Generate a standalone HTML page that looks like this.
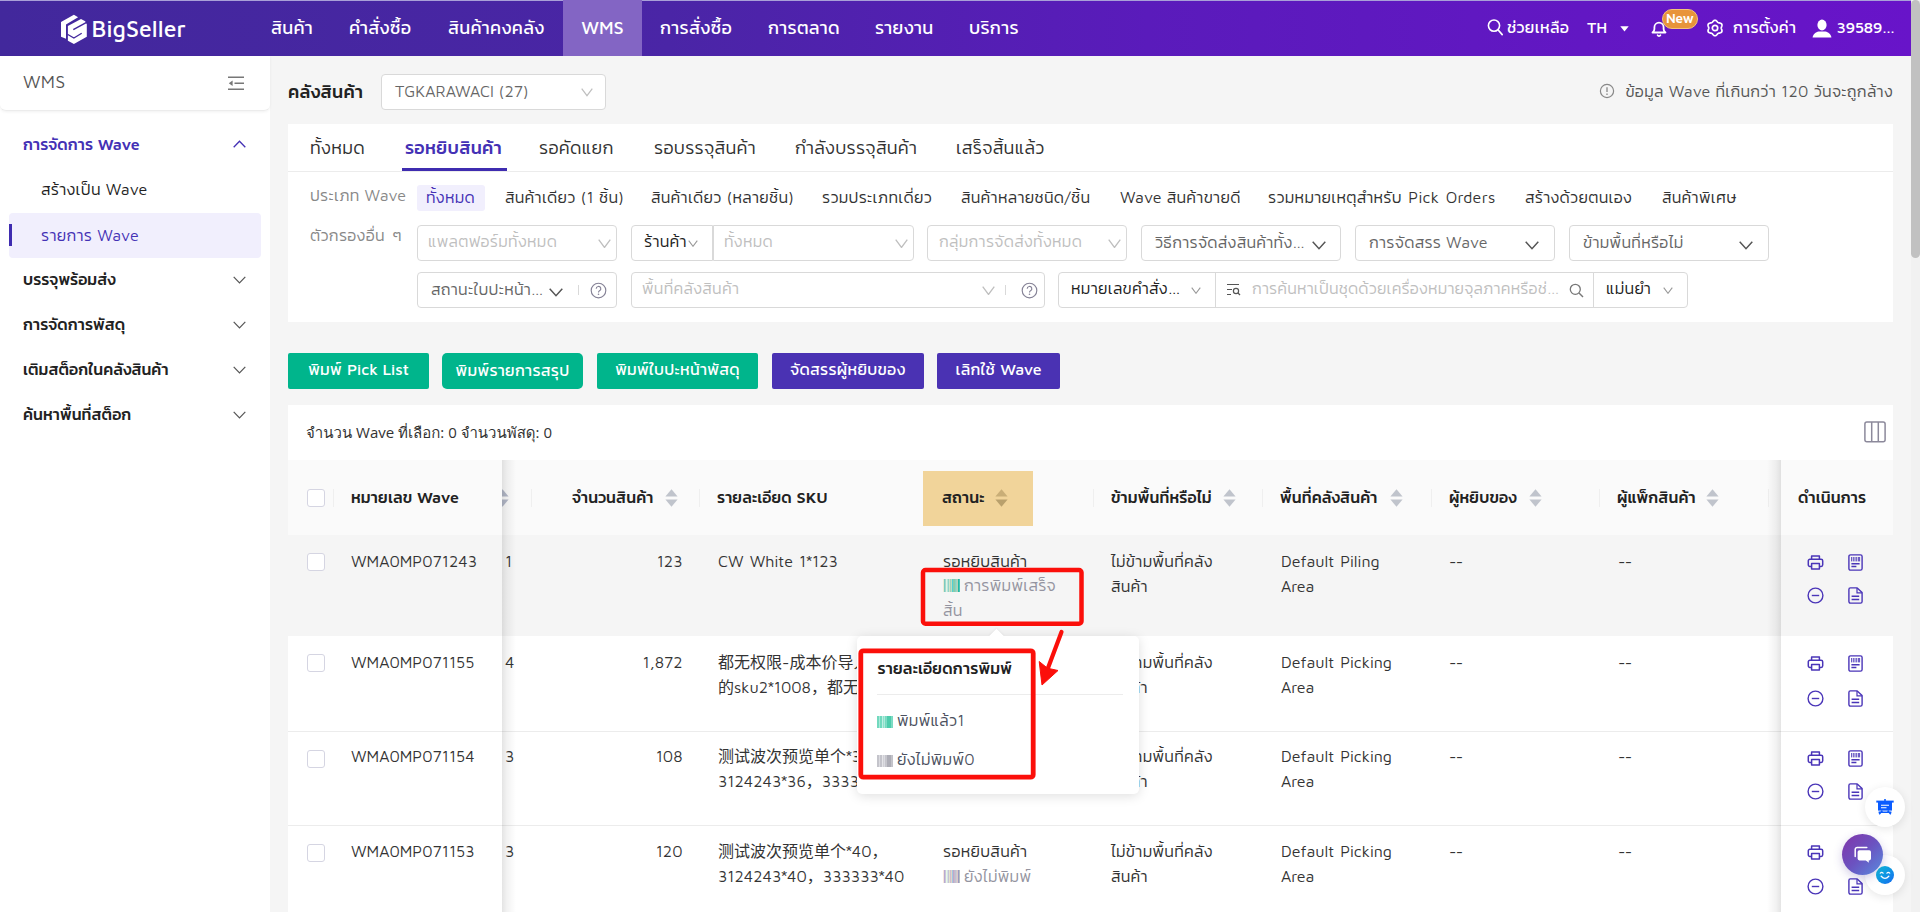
<!DOCTYPE html>
<html lang="th">
<head>
<meta charset="utf-8">
<title>BigSeller WMS - รายการ Wave</title>
<style>
*{box-sizing:border-box;margin:0;padding:0}
html,body{width:1920px;height:912px;overflow:hidden;background:#f5f5f5}
body{font-family:"Maven Pro","Kanit","Liberation Sans","Noto Sans CJK SC",sans-serif;font-weight:300;font-size:16px;color:#333;position:relative;letter-spacing:.3px}
b.m5{font-weight:500;letter-spacing:0}b.m6{font-weight:600;letter-spacing:0}
/* ---------- header ---------- */
#hdr{position:absolute;left:0;top:0;width:1911px;height:56px;background:linear-gradient(90deg,#42289c 0%,#4a25a6 35%,#5a1bbb 60%,#6814c9 100%);color:#fff}
#hdr .topline{position:absolute;left:0;top:0;width:100%;height:1px;background:#a9a0d8}
#logo{position:absolute;left:56px;top:10px}
#logotxt{position:absolute;left:91.500px;top:13px;font-size:23px;font-weight:500;letter-spacing:.1px;color:#fff;line-height:32px}
.nav{position:absolute;top:0;height:56px;line-height:55px;font-size:18px;font-weight:400;color:#fff;white-space:nowrap}
.nav.act{background:#8365c4;text-align:center}
.hr{position:absolute;top:0;height:56px;line-height:54px;font-size:16px;font-weight:400;color:#fff;white-space:nowrap}
/* ---------- scrollbar ---------- */
#sb{position:absolute;left:1911px;top:0;width:9px;height:912px;background:#f1f1f1}
#sb i{position:absolute;left:0;top:0;width:9px;height:258px;background:#c1c1c1;border-radius:5px}
/* ---------- sidebar ---------- */
#side{position:absolute;left:0;top:56px;width:270px;height:856px;background:#fff}
#side .ttl{position:absolute;left:0;top:0;width:270px;height:55px;border-bottom:1px solid #ececec;box-shadow:0 1px 3px rgba(0,0,0,.06);border-radius:0 0 6px 6px}
#side .ttl span{position:absolute;left:23px;top:15px;font-size:18px;font-weight:400;color:#555}
.mi{position:absolute;left:0;width:270px;height:45px;line-height:44px;font-size:16px;color:#222;font-weight:500;white-space:nowrap;letter-spacing:.05px}
.mi span{position:absolute;left:23px}
.mi.sub span{left:41px;font-weight:300}
.mi.sub{font-weight:300;letter-spacing:.3px}
.mi svg{position:absolute;left:233px;top:18.500px}
.mi.cur{left:9px;width:252px;background:#f1effd;border-radius:4px;color:#4431b5}
.mi.cur span{left:32px}
.mi.cur:before{content:"";position:absolute;left:0;top:11px;width:3px;height:22px;background:#3f2cb0}

/* ---------- main ---------- */
#main{position:absolute;left:270px;top:56px;width:1641px;height:856px}
.abs{position:absolute;white-space:nowrap}
.panel{position:absolute;background:#fff}
.wh-l{position:absolute;left:18px;top:22px;font-size:18px;font-weight:500;color:#222;line-height:28px}
.sel{position:absolute;height:36px;border:1px solid #d9d9d9;border-radius:4px;background:#fff;font-size:16px;line-height:33px;color:#bfbfbf;white-space:nowrap;overflow:hidden}
.sel .t{position:absolute;left:10px;top:-.8px}
.sel.dk{color:#666}.sel.dk .t{top:.200px}
.sel.bk{color:#222}
.sel svg{position:absolute}
.tab{position:absolute;top:0;height:47px;line-height:47px;font-size:18px;color:#333;white-space:nowrap}
.tab.on{color:#4431b5;font-weight:500}
.chip{position:absolute;top:61px;height:26px;line-height:25px;font-size:16px;color:#333;padding:0 9px;border-radius:3px;white-space:nowrap}
.chip.on{background:#f1effd;color:#4431b5;padding-right:10px}
.flab{position:absolute;left:22px;font-size:16px;color:#888;white-space:nowrap;line-height:24px}
.btn{position:absolute;top:297px;height:36px;line-height:32.500px;border-radius:2px;color:#fff;font-size:16px;font-weight:400;text-align:center;white-space:nowrap}
.btn.g{background:#00b58c}
.btn.p{background:#4a32b3}

/* ---------- table ---------- */
#tp .cnt{position:absolute;left:18px;top:16px;font-family:"Open Sans",Loma,"Noto Sans Thai","Liberation Sans",sans-serif;font-weight:400;font-size:15px;color:#333;line-height:22px;white-space:nowrap;letter-spacing:0}
.thead{position:absolute;left:0;top:55px;width:1605px;height:75px;background:#fafafa}
.th{position:absolute;top:0;height:75px;line-height:74px;font-size:16px;font-weight:500;color:#222;white-space:nowrap;letter-spacing:.1px}
.vsep{position:absolute;top:29px;width:1px;height:18px;background:#efefef}
.srt{position:absolute;top:29px;width:13px;height:18px}
.row{position:absolute;left:0;width:1605px;border-bottom:1px solid #ececec;background:#fff}
.row.r2 .td{line-height:25px}.row.r3 .td{top:12px}.row.r4 .td{top:12.500px;line-height:25px}.row.hv{background:#f5f5f5;border-bottom-color:#f5f5f5}
.td{position:absolute;top:14px;font-size:16px;line-height:24.600px;color:#333;font-weight:300;white-space:nowrap}
.td.l{font-weight:400;letter-spacing:0;word-spacing:1.500px}.as{font-family:Kanit,"Liberation Sans",sans-serif;font-weight:300;margin:0 -.6px}
.cb{position:absolute;left:19px;width:18px;height:18px;border:1px solid #d5d5e2;border-radius:3px;background:#fff}
.gry{color:#9494a0}
.bc{display:inline-block;width:17px;height:13px;vertical-align:-1.500px;margin-right:4px}
.fixl{position:absolute;left:214px;top:55px;width:14px;height:452px;background:linear-gradient(90deg,rgba(0,0,0,.105),rgba(0,0,0,.05) 35%,rgba(0,0,0,0));pointer-events:none}
.fixr{position:absolute;left:1479px;top:55px;width:14px;height:452px;background:linear-gradient(270deg,rgba(0,0,0,.105),rgba(0,0,0,.05) 35%,rgba(0,0,0,0));pointer-events:none}
.ic{position:absolute}

/* ---------- popover / annotations / floats ---------- */
#pop{position:absolute;left:857px;top:636px;width:282px;height:158px;background:#fff;border-radius:5px;box-shadow:0 2px 12px rgba(0,0,0,.13)}
#pop:before{content:"";position:absolute;left:134px;top:-5px;width:11px;height:11px;background:#fff;transform:rotate(45deg);box-shadow:-1px -1px 2px rgba(0,0,0,.04)}
#pop .pt{position:absolute;left:20.500px;top:19px;letter-spacing:.15px;font-size:16px;font-weight:500;color:#222;line-height:26px;white-space:nowrap}
#pop .pl{position:absolute;left:20px;top:58px;width:246px;height:1px;background:#ececec}
#pop .pi{position:absolute;left:20px;font-size:16px;color:#4c5160;line-height:24px;white-space:nowrap}
#anno{position:absolute;left:0;top:0;pointer-events:none}
.fl{position:absolute;border-radius:50%}
</style>
</head>
<body>
<!-- HEADER -->
<div id="hdr">
  <div class="topline"></div>
  <svg id="logo" width="40" height="38" viewBox="0 0 40 38"><path d="M5 12.1L17.900 4.800L22.100 7.300L10 14.400V28.750L5 26.700Z" fill="#fff"/><path d="M11.900 16L25 8.950L29.200 11.250L30.800 14.400V26.700L17.900 34L11.900 30.800Z" fill="#fff"/><path d="M31.500 11.900L17.300 19.600" stroke="#43289d" stroke-width="1.500" fill="none"/><path d="M11.400 24.300L17.900 28.100L25.700 23.200" stroke="#43289d" stroke-width="1.300" fill="none"/></svg>
  <div id="logotxt">BigSeller</div>
  <div class="nav" style="left:271px">สินค้า</div>
  <div class="nav" style="left:349px">คำสั่งซื้อ</div>
  <div class="nav" style="left:448px">สินค้าคงคลัง</div>
  <div class="nav act" style="left:563px;width:79px;font-weight:500;letter-spacing:0">WMS</div>
  <div class="nav" style="left:660px">การสั่งซื้อ</div>
  <div class="nav" style="left:768px">การตลาด</div>
  <div class="nav" style="left:875px">รายงาน</div>
  <div class="nav" style="left:969px">บริการ</div>
  <svg class="abs" style="left:1487px;top:18px" width="17" height="18" viewBox="0 0 17 18"><circle cx="7" cy="7.6" r="5.6" fill="none" stroke="#fff" stroke-width="1.6"/><path d="M11.2 12l4 4.6" stroke="#fff" stroke-width="1.7" stroke-linecap="round"/></svg>
  <svg class="abs" style="left:1620px;top:26px" width="9" height="6" viewBox="0 0 9 6"><path d="M0.3 0.3h8.4L4.5 5.6z" fill="#fff"/></svg>
  <svg class="abs" style="left:1650px;top:19px" width="18" height="19" viewBox="0 0 18 19"><path d="M2.500 13.500c1.300-.900 1.900-2 1.900-3.600V8.300a4.600 4.600 0 0 1 9.200 0v1.600c0 1.600.600 2.700 1.900 3.600z" fill="none" stroke="#fff" stroke-width="1.800" stroke-linejoin="round"/><path d="M7.500 16.200a1.700 1.700 0 0 0 3 0" fill="none" stroke="#fff" stroke-width="1.600" stroke-linecap="round"/></svg>
  <div class="abs" style="left:1661.500px;top:9px;width:36.500px;height:20px;border-radius:10px;background:#e8943a;border:1px solid #f4c27a;color:#fff;font-size:13.500px;font-weight:600;line-height:17px;text-align:center;letter-spacing:-.2px">New</div>
  <svg class="abs" style="left:1706px;top:19px" width="18" height="18" viewBox="0 0 18 18"><path d="M15.71 12.88 L15.40 13.27 L14.97 13.58 L14.48 13.80 L13.95 13.95 L13.43 14.05 L12.94 14.13 L12.50 14.24 L12.12 14.41 L11.79 14.66 L11.48 14.98 L11.16 15.36 L10.81 15.76 L10.42 16.15 L9.98 16.47 L9.50 16.68 L9.00 16.75 L8.50 16.68 L8.02 16.47 L7.58 16.15 L7.19 15.76 L6.84 15.36 L6.52 14.98 L6.21 14.66 L5.88 14.41 L5.50 14.24 L5.06 14.13 L4.57 14.05 L4.05 13.95 L3.52 13.80 L3.03 13.58 L2.60 13.27 L2.29 12.88 L2.10 12.40 L2.04 11.88 L2.10 11.34 L2.24 10.81 L2.42 10.31 L2.59 9.84 L2.71 9.41 L2.75 9.00 L2.71 8.59 L2.59 8.16 L2.42 7.69 L2.24 7.19 L2.10 6.66 L2.04 6.12 L2.10 5.60 L2.29 5.13 L2.60 4.73 L3.03 4.42 L3.52 4.20 L4.05 4.05 L4.57 3.95 L5.06 3.87 L5.50 3.76 L5.87 3.59 L6.21 3.34 L6.52 3.02 L6.84 2.64 L7.19 2.24 L7.58 1.85 L8.02 1.53 L8.50 1.32 L9.00 1.25 L9.50 1.32 L9.98 1.53 L10.42 1.85 L10.81 2.24 L11.16 2.64 L11.48 3.02 L11.79 3.34 L12.12 3.59 L12.50 3.76 L12.94 3.87 L13.43 3.95 L13.95 4.05 L14.48 4.20 L14.97 4.42 L15.40 4.73 L15.71 5.13 L15.90 5.60 L15.96 6.12 L15.90 6.66 L15.76 7.19 L15.58 7.69 L15.41 8.16 L15.29 8.59 L15.25 9.00 L15.29 9.41 L15.41 9.84 L15.58 10.31 L15.76 10.81 L15.90 11.34 L15.96 11.88 L15.90 12.40Z" fill="none" stroke="#fff" stroke-width="1.700" stroke-linejoin="round"/><circle cx="9" cy="9" r="2.700" fill="none" stroke="#fff" stroke-width="1.700"/></svg>
  <svg class="abs" style="left:1812px;top:19px" width="20" height="19" viewBox="0 0 20 19"><ellipse cx="10" cy="6" rx="4.600" ry="5.400" fill="#fff"/><path d="M0.600 18.600c.400-3.600 3.200-5.400 6-6h6.800c2.800.600 5.600 2.400 6 6z" fill="#fff"/></svg>
  <div class="hr" style="left:1507px">ช่วยเหลือ</div>
  <div class="hr" style="left:1587px;letter-spacing:0;font-weight:500">TH</div>
  <div class="hr" style="left:1733px">การตั้งค่า</div>
  <div class="hr" style="left:1836.500px;letter-spacing:-.45px;font-weight:500">39589…</div>
</div>
<div id="sb"><i></i></div>

<!-- SIDEBAR -->
<div id="side">
  <div class="ttl"><span>WMS</span><svg style="position:absolute;left:228.400px;top:20.300px" width="16" height="14.500" viewBox="0 0 16 14"><path d="M0 1h16M6.500 7h9.500M0 13h16" stroke="#777" stroke-width="1.300"/><path d="M4.600 4.200L0.800 7l3.800 2.800z" fill="#777"/></svg></div>
  <div class="mi" style="top:66px;color:#4431b5;font-weight:500"><span>การจัดการ <b class="m6">Wave</b></span><svg style="top:17.500px" width="13" height="8" viewBox="0 0 13 8"><path d="M0.7 7.2L6.5 1.2L12.3 7.2" fill="none" stroke="#4431b5" stroke-width="1.3"/></svg></div>
  <div class="mi sub" style="top:111px"><span>สร้างเป็น Wave</span></div>
  <div class="mi sub cur" style="top:157px"><span>รายการ Wave</span></div>
  <div class="mi" style="top:201px"><span>บรรจุพร้อมส่ง</span><svg width="13" height="8" viewBox="0 0 13 8"><path d="M0.7 0.800L6.5 6.800L12.3 0.800" fill="none" stroke="#555" stroke-width="1.2"/></svg></div>
  <div class="mi" style="top:246px"><span>การจัดการพัสดุ</span><svg width="13" height="8" viewBox="0 0 13 8"><path d="M0.7 0.800L6.5 6.800L12.3 0.800" fill="none" stroke="#555" stroke-width="1.2"/></svg></div>
  <div class="mi" style="top:291px"><span>เติมสต็อกในคลังสินค้า</span><svg width="13" height="8" viewBox="0 0 13 8"><path d="M0.7 0.800L6.5 6.800L12.3 0.800" fill="none" stroke="#555" stroke-width="1.2"/></svg></div>
  <div class="mi" style="top:336px"><span>ค้นหาพื้นที่สต็อก</span><svg width="13" height="8" viewBox="0 0 13 8"><path d="M0.7 0.800L6.5 6.800L12.3 0.800" fill="none" stroke="#555" stroke-width="1.2"/></svg></div>
</div>

<!-- MAIN -->
<div id="main">
  <!-- warehouse bar -->
  <div class="wh-l">คลังสินค้า</div>
  <div class="sel dk" style="left:111px;top:18px;width:225px"><span class="t" style="left:13px;letter-spacing:.1px">TGKARAWACI (27)</span><svg style="left:199px;top:13px" width="12" height="8.6" viewBox="0 0 12 8.6"><path d="M0.7 0.7 L6.0 7.7 L11.3 0.7" fill="none" stroke="#bfbfbf" stroke-width="1.2"/></svg></div>
  <svg class="abs" style="left:1329px;top:27px" width="16" height="16" viewBox="0 0 16 16"><circle cx="8" cy="8" r="6.6" fill="none" stroke="#888" stroke-width="1.2"/><path d="M8 4.3v4.6M8 10.6v1.3" stroke="#888" stroke-width="1.3"/></svg>
  <div class="abs" style="right:18px;top:22px;font-size:16px;color:#555;line-height:26px">ข้อมูล Wave ที่เกินกว่า 120 วันจะถูกล้าง</div>

  <!-- filter panel -->
  <div class="panel" style="left:18px;top:68px;width:1605px;height:198px">
    <div style="position:absolute;left:0;top:47px;width:100%;height:1px;background:#ececec"></div>
    <div class="tab" style="left:22px">ทั้งหมด</div>
    <div class="tab on" style="left:117px">รอหยิบสินค้า</div>
    <div style="position:absolute;left:114px;top:44px;width:105px;height:3px;background:#3f2cb0"></div>
    <div class="tab" style="left:251px">รอคัดแยก</div>
    <div class="tab" style="left:366px">รอบรรจุสินค้า</div>
    <div class="tab" style="left:507px">กำลังบรรจุสินค้า</div>
    <div class="tab" style="left:668px">เสร็จสิ้นแล้ว</div>

    <div class="flab" style="top:59px">ประเภท Wave</div>
    <div class="chip on" style="left:129px">ทั้งหมด</div>
    <div class="chip" style="left:208px">สินค้าเดียว (1 ชิ้น)</div>
    <div class="chip" style="left:354px">สินค้าเดียว (หลายชิ้น)</div>
    <div class="chip" style="left:525px">รวมประเภทเดี่ยว</div>
    <div class="chip" style="left:664px">สินค้าหลายชนิด/ชิ้น</div>
    <div class="chip" style="left:823px">Wave สินค้าขายดี</div>
    <div class="chip" style="left:971px;word-spacing:1.500px">รวมหมายเหตุสำหรับ Pick Orders</div>
    <div class="chip" style="left:1228px">สร้างด้วยตนเอง</div>
    <div class="chip" style="left:1365px">สินค้าพิเศษ</div>

    <div class="flab" style="top:99px;word-spacing:2.500px">ตัวกรองอื่น ๆ</div>
    <!-- row 2 -->
    <div class="sel" style="left:129px;top:101px;width:200px"><span class="t">แพลตฟอร์มทั้งหมด</span><svg style="left:180px;top:13px" width="13" height="9.4" viewBox="0 0 13 9.4"><path d="M0.7 0.7 L6.5 8.5 L12.3 0.7" fill="none" stroke="#bfbfbf" stroke-width="1.3"/></svg></div>
    <div class="sel bk" style="left:343px;top:101px;width:82px;border-radius:4px 0 0 4px"><span class="t" style="left:12px">ร้านค้า</span><svg style="left:56px;top:14px" width="10" height="7.2" viewBox="0 0 10 7.2"><path d="M0.7 0.7 L5.0 6.3 L9.3 0.7" fill="none" stroke="#999" stroke-width="1.1"/></svg></div>
    <div class="sel" style="left:425px;top:101px;width:201px;border-radius:0 4px 4px 0"><span class="t" style="left:10px">ทั้งหมด</span><svg style="left:181px;top:13px" width="13" height="9.4" viewBox="0 0 13 9.4"><path d="M0.7 0.7 L6.5 8.5 L12.3 0.7" fill="none" stroke="#bfbfbf" stroke-width="1.3"/></svg></div>
    <div class="sel" style="left:639px;top:101px;width:200px"><span class="t" style="left:11px">กลุ่มการจัดส่งทั้งหมด</span><svg style="left:180px;top:13px" width="13" height="9.4" viewBox="0 0 13 9.4"><path d="M0.7 0.7 L6.5 8.5 L12.3 0.7" fill="none" stroke="#bfbfbf" stroke-width="1.3"/></svg></div>
    <div class="sel dk" style="left:853px;top:101px;width:200px"><span class="t" style="left:13px">วิธีการจัดส่งสินค้าทั้ง…</span><svg style="left:170px;top:15px" width="14" height="8.8" viewBox="0 0 14 8.8"><path d="M0.7 0.8 L7 7.7 L13.3 0.8" fill="none" stroke="#555" stroke-width="1.5"/></svg></div>
    <div class="sel dk" style="left:1067px;top:101px;width:200px"><span class="t" style="left:13px">การจัดสรร Wave</span><svg style="left:169px;top:15px" width="14" height="8.8" viewBox="0 0 14 8.8"><path d="M0.7 0.8 L7 7.7 L13.3 0.8" fill="none" stroke="#555" stroke-width="1.5"/></svg></div>
    <div class="sel dk" style="left:1281px;top:101px;width:200px"><span class="t" style="left:13px">ข้ามพื้นที่หรือไม่</span><svg style="left:169px;top:15px" width="14" height="8.8" viewBox="0 0 14 8.8"><path d="M0.7 0.8 L7 7.7 L13.3 0.8" fill="none" stroke="#555" stroke-width="1.5"/></svg></div>
    <!-- row 3 -->
    <div class="sel dk" style="left:129px;top:148px;width:200px"><span class="t" style="left:13px">สถานะใบปะหน้า…</span><svg style="left:131px;top:15px" width="14" height="8.8" viewBox="0 0 14 8.8"><path d="M0.7 0.8 L7 7.7 L13.3 0.8" fill="none" stroke="#555" stroke-width="1.5"/></svg>
      <i style="position:absolute;left:160px;top:12px;width:1px;height:10px;background:#d9d9d9"></i>
      <svg style="left:172px;top:9px" width="17" height="17" viewBox="0 0 17 17"><circle cx="8.5" cy="8.5" r="7.3" fill="none" stroke="#858296" stroke-width="1.15"/><path d="M6.2 6.8a2.3 2.3 0 1 1 3.3 2c-.7.4-1 .8-1 1.6" fill="none" stroke="#858296" stroke-width="1.15"/><circle cx="8.5" cy="12.3" r=".8" fill="#858296"/></svg></div>
    <div class="sel" style="left:343px;top:148px;width:414px"><span class="t">พื้นที่คลังสินค้า</span><svg style="left:350px;top:13px" width="13" height="9.4" viewBox="0 0 13 9.4"><path d="M0.7 0.7 L6.5 8.5 L12.3 0.7" fill="none" stroke="#bfbfbf" stroke-width="1.3"/></svg>
      <i style="position:absolute;left:373px;top:12px;width:1px;height:10px;background:#d9d9d9"></i>
      <svg style="left:389px;top:9px" width="17" height="17" viewBox="0 0 17 17"><circle cx="8.5" cy="8.5" r="7.3" fill="none" stroke="#858296" stroke-width="1.15"/><path d="M6.2 6.8a2.3 2.3 0 1 1 3.3 2c-.7.4-1 .8-1 1.6" fill="none" stroke="#858296" stroke-width="1.15"/><circle cx="8.5" cy="12.3" r=".8" fill="#858296"/></svg></div>
    <div class="sel bk" style="left:770px;top:148px;width:159px;border-radius:4px 0 0 4px"><span class="t" style="left:12px">หมายเลขคำสั่ง…</span><svg style="left:132px;top:14px" width="10" height="7.2" viewBox="0 0 10 7.2"><path d="M0.7 0.7 L5.0 6.3 L9.3 0.7" fill="none" stroke="#999" stroke-width="1.1"/></svg></div>
    <div class="sel" style="left:927px;top:148px;width:380px;border-radius:0"><svg style="left:10px;top:10px" width="15" height="14" viewBox="0 0 15 14"><path d="M1 1.5h12M1 6.5h5M1 11.5h4" stroke="#555" stroke-width="1.2" fill="none"/><circle cx="10" cy="8" r="2.6" fill="none" stroke="#555" stroke-width="1.2"/><path d="M12 10l2 2" stroke="#555" stroke-width="1.2"/></svg><span class="t" style="left:36px;letter-spacing:.18px">การค้นหาเป็นชุดด้วยเครื่องหมายจุลภาคหรือช่…</span>
      <svg style="left:353px;top:10px" width="15" height="15" viewBox="0 0 15 15"><circle cx="6.3" cy="6.3" r="5" fill="none" stroke="#777" stroke-width="1.3"/><path d="M10 10l4 4" stroke="#777" stroke-width="1.4"/></svg></div>
    <div class="sel bk" style="left:1305px;top:148px;width:95px;border-radius:0 4px 4px 0"><span class="t" style="left:12px">แม่นยำ</span><svg style="left:69px;top:14px" width="10" height="7.2" viewBox="0 0 10 7.2"><path d="M0.7 0.7 L5.0 6.3 L9.3 0.7" fill="none" stroke="#999" stroke-width="1.1"/></svg></div>
  </div>

  <!-- buttons -->
  <div class="btn g" style="left:18px;width:141px">พิมพ์ <b class="m5">Pick List</b></div>
  <div class="btn g" style="left:172px;width:141px;border-radius:5px;line-height:34px">พิมพ์รายการสรุป</div>
  <div class="btn g" style="left:327px;width:161px">พิมพ์ใบปะหน้าพัสดุ</div>
  <div class="btn p" style="left:502px;width:152px">จัดสรรผู้หยิบของ</div>
  <div class="btn p" style="left:667px;width:123px">เลิกใช้ <b class="m5">Wave</b></div>

  <!-- TABLE PANEL -->
  <div class="panel" id="tp" style="left:18px;top:349px;width:1605px;height:507px">
    <div class="cnt">จำนวน Wave ที่เลือก: 0 จำนวนพัสดุ: 0</div>
    <svg class="ic" style="left:1576px;top:16px" width="22" height="22" viewBox="0 0 22 22"><rect x="0.9" y="0.9" width="20.2" height="19.8" rx="2" fill="none" stroke="#8c899b" stroke-width="1.5"/><path d="M7.7 1v20M14.3 1v20" stroke="#8c899b" stroke-width="1.5"/></svg>
    <div class="thead">
      <div class="th" style="left:284px">จำนวนสินค้า</div><svg class="srt" style="left:377px" viewBox="0 0 13 18"><path d="M6.5 0.3L12.6 7.4H0.4Z" fill="#c0c4cc"/><path d="M6.5 17.7L12.6 10.6H0.4Z" fill="#c0c4cc"/></svg>
      <svg class="srt" style="left:208px" viewBox="0 0 13 18"><path d="M6.5 0.3L12.6 7.4H0.4Z" fill="#b3b8c8"/><path d="M6.5 17.7L12.6 10.6H0.4Z" fill="#b3b8c8"/></svg>
      <div class="vsep" style="left:243px"></div>
      <div class="vsep" style="left:411px"></div>
      <div class="th" style="left:429px">รายละเอียด <b class="m6">SKU</b></div>
      <div style="position:absolute;left:635px;top:11px;width:110px;height:55px;background:#f1d49a"></div>
      <div class="th" style="left:654px">สถานะ</div><svg class="srt" style="left:707px" viewBox="0 0 13 18"><path d="M6.5 0.3L12.6 7.4H0.4Z" fill="#c9ae77"/><path d="M6.5 17.7L12.6 10.6H0.4Z" fill="#b9a06c"/></svg>
      <div class="vsep" style="left:805px"></div>
      <div class="th" style="left:823px">ข้ามพื้นที่หรือไม่</div><svg class="srt" style="left:935px" viewBox="0 0 13 18"><path d="M6.5 0.3L12.6 7.4H0.4Z" fill="#c0c4cc"/><path d="M6.5 17.7L12.6 10.6H0.4Z" fill="#c0c4cc"/></svg>
      <div class="vsep" style="left:974px"></div>
      <div class="th" style="left:992px">พื้นที่คลังสินค้า</div><svg class="srt" style="left:1102px" viewBox="0 0 13 18"><path d="M6.5 0.3L12.6 7.4H0.4Z" fill="#c0c4cc"/><path d="M6.5 17.7L12.6 10.6H0.4Z" fill="#c0c4cc"/></svg>
      <div class="vsep" style="left:1143px"></div>
      <div class="th" style="left:1161px">ผู้หยิบของ</div><svg class="srt" style="left:1241px" viewBox="0 0 13 18"><path d="M6.5 0.3L12.6 7.4H0.4Z" fill="#c0c4cc"/><path d="M6.5 17.7L12.6 10.6H0.4Z" fill="#c0c4cc"/></svg>
      <div class="vsep" style="left:1311px"></div>
      <div class="th" style="left:1329px">ผู้แพ็กสินค้า</div><svg class="srt" style="left:1418px" viewBox="0 0 13 18"><path d="M6.5 0.3L12.6 7.4H0.4Z" fill="#c0c4cc"/><path d="M6.5 17.7L12.6 10.6H0.4Z" fill="#c0c4cc"/></svg>
      <div class="vsep" style="left:1480px"></div>
    </div>

    <div class="row hv" style="top:130px;height:101px">
      <div class="td l" style="left:217px">1</div>
      <div class="td l" style="left:243px;width:151.500px;text-align:right">123</div>
      <div class="td l" style="left:430px">CW White 1<span class="as">*</span>123</div>
      <div class="td" style="left:655px">รอหยิบสินค้า<br><span class="gry"><span style="position:relative;top:-1px"><svg class="bc" viewBox="0 0 17 13"><rect x="0.3" y="0" width="0.6" height="13" fill="#fce8c0"/><rect x="0.9" y="0" width="1.9" height="13" fill="#7ccabf"/><rect x="2.8" y="0" width="1.9" height="13" fill="#e2f4e4"/><rect x="4.7" y="0" width="1.1" height="13" fill="#5cc4be"/><rect x="5.8" y="0" width="1.0" height="13" fill="#e4ecc4"/><rect x="6.8" y="0" width="1.0" height="13" fill="#7cc4c0"/><rect x="7.8" y="0" width="1.0" height="13" fill="#d6dca6"/><rect x="8.8" y="0" width="1.2" height="13" fill="#52d0d6"/><rect x="10" y="0" width="2.6" height="13" fill="#86ccac"/><rect x="12.6" y="0" width="1.1" height="13" fill="#48c4be"/><rect x="13.7" y="0" width="1.0" height="13" fill="#f4d6a4"/><rect x="14.7" y="0" width="2.1" height="13" fill="#1eb8a6"/></svg>การพิมพ์เสร็จ</span><br>สิ้น</span></div>
      <div class="td" style="left:823px">ไม่ข้ามพื้นที่คลัง<br>สินค้า</div>
      <div class="td l" style="left:993px">Default Piling<br>Area</div>
      <div class="td l" style="left:1161px;letter-spacing:-.6px">--</div>
      <div class="td l" style="left:1330px;letter-spacing:-.6px">--</div>
    </div>
    <div class="row r2" style="top:231px;height:96px">
      <div class="td l" style="left:217px">4</div>
      <div class="td l" style="left:243px;width:151.500px;text-align:right">1,872</div>
      <div class="td l" style="left:430px">都无权限-成本价导入<br>的sku2<span class="as">*</span>1008，都无权限</div>
      <div class="td" style="left:655px">รอหยิบสินค้า<br><span class="gry"><svg class="bc" viewBox="0 0 17 13"><rect x="0.3" y="0" width="0.6" height="13" fill="#fde4c8"/><rect x="0.9" y="0" width="1.9" height="13" fill="#b8aad0"/><rect x="2.8" y="0" width="1.9" height="13" fill="#e6fbe6"/><rect x="4.7" y="0" width="1.1" height="13" fill="#aaa8d0"/><rect x="5.8" y="0" width="1.0" height="13" fill="#eeeec0"/><rect x="6.8" y="0" width="1.0" height="13" fill="#b8a8d0"/><rect x="7.8" y="0" width="1.0" height="13" fill="#f0d0b0"/><rect x="8.8" y="0" width="1.2" height="13" fill="#a2c8e2"/><rect x="10" y="0" width="1.8" height="13" fill="#c0a8c8"/><rect x="11.8" y="0" width="0.8" height="13" fill="#b4b4b4"/><rect x="12.6" y="0" width="1.1" height="13" fill="#a2b0d4"/><rect x="13.7" y="0" width="1.0" height="13" fill="#fcd0b0"/><rect x="14.7" y="0" width="1.3" height="13" fill="#9a98c2"/><rect x="16" y="0" width="0.8" height="13" fill="#a4b0b0"/></svg>ยังไม่พิมพ์</span></div>
      <div class="td" style="left:823px">ไม่ข้ามพื้นที่คลัง<br>สินค้า</div>
      <div class="td l" style="left:993px">Default Picking<br>Area</div>
      <div class="td l" style="left:1161px;letter-spacing:-.6px">--</div>
      <div class="td l" style="left:1330px;letter-spacing:-.6px">--</div>
    </div>
    <div class="row r3" style="top:327px;height:94px">
      <div class="td l" style="left:217px">3</div>
      <div class="td l" style="left:243px;width:151.500px;text-align:right">108</div>
      <div class="td l" style="left:430px">测试波次预览单个<span class="as">*</span>36，<br>3124243<span class="as">*</span>36，333333<span class="as">*</span>36</div>
      <div class="td" style="left:655px">รอหยิบสินค้า<br><span class="gry"><svg class="bc" viewBox="0 0 17 13"><rect x="0.3" y="0" width="0.6" height="13" fill="#fde4c8"/><rect x="0.9" y="0" width="1.9" height="13" fill="#b8aad0"/><rect x="2.8" y="0" width="1.9" height="13" fill="#e6fbe6"/><rect x="4.7" y="0" width="1.1" height="13" fill="#aaa8d0"/><rect x="5.8" y="0" width="1.0" height="13" fill="#eeeec0"/><rect x="6.8" y="0" width="1.0" height="13" fill="#b8a8d0"/><rect x="7.8" y="0" width="1.0" height="13" fill="#f0d0b0"/><rect x="8.8" y="0" width="1.2" height="13" fill="#a2c8e2"/><rect x="10" y="0" width="1.8" height="13" fill="#c0a8c8"/><rect x="11.8" y="0" width="0.8" height="13" fill="#b4b4b4"/><rect x="12.6" y="0" width="1.1" height="13" fill="#a2b0d4"/><rect x="13.7" y="0" width="1.0" height="13" fill="#fcd0b0"/><rect x="14.7" y="0" width="1.3" height="13" fill="#9a98c2"/><rect x="16" y="0" width="0.8" height="13" fill="#a4b0b0"/></svg>ยังไม่พิมพ์</span></div>
      <div class="td" style="left:823px">ไม่ข้ามพื้นที่คลัง<br>สินค้า</div>
      <div class="td l" style="left:993px">Default Picking<br>Area</div>
      <div class="td l" style="left:1161px;letter-spacing:-.6px">--</div>
      <div class="td l" style="left:1330px;letter-spacing:-.6px">--</div>
    </div>
    <div class="row r4" style="top:421px;height:94px">
      <div class="td l" style="left:217px">3</div>
      <div class="td l" style="left:243px;width:151.500px;text-align:right">120</div>
      <div class="td l" style="left:430px">测试波次预览单个<span class="as">*</span>40，<br>3124243<span class="as">*</span>40，333333<span class="as">*</span>40</div>
      <div class="td" style="left:655px">รอหยิบสินค้า<br><span class="gry"><svg class="bc" viewBox="0 0 17 13"><rect x="0.3" y="0" width="0.6" height="13" fill="#fde4c8"/><rect x="0.9" y="0" width="1.9" height="13" fill="#b8aad0"/><rect x="2.8" y="0" width="1.9" height="13" fill="#e6fbe6"/><rect x="4.7" y="0" width="1.1" height="13" fill="#aaa8d0"/><rect x="5.8" y="0" width="1.0" height="13" fill="#eeeec0"/><rect x="6.8" y="0" width="1.0" height="13" fill="#b8a8d0"/><rect x="7.8" y="0" width="1.0" height="13" fill="#f0d0b0"/><rect x="8.8" y="0" width="1.2" height="13" fill="#a2c8e2"/><rect x="10" y="0" width="1.8" height="13" fill="#c0a8c8"/><rect x="11.8" y="0" width="0.8" height="13" fill="#b4b4b4"/><rect x="12.6" y="0" width="1.1" height="13" fill="#a2b0d4"/><rect x="13.7" y="0" width="1.0" height="13" fill="#fcd0b0"/><rect x="14.7" y="0" width="1.3" height="13" fill="#9a98c2"/><rect x="16" y="0" width="0.8" height="13" fill="#a4b0b0"/></svg>ยังไม่พิมพ์</span></div>
      <div class="td" style="left:823px">ไม่ข้ามพื้นที่คลัง<br>สินค้า</div>
      <div class="td l" style="left:993px">Default Picking<br>Area</div>
      <div class="td l" style="left:1161px;letter-spacing:-.6px">--</div>
      <div class="td l" style="left:1330px;letter-spacing:-.6px">--</div>
    </div>
    <!-- fixed left column -->
    <div style="position:absolute;left:0;top:55px;width:214px;height:75px;background:#fafafa"></div>
    <div class="cb" style="top:84px"></div>
    <div class="vsep" style="left:45px;top:84px"></div>
    <div class="th" style="left:63px;top:55px">หมายเลข <b class="m6">Wave</b></div>
    <div style="position:absolute;left:0;top:130px;width:214px;height:101px;background:#f5f5f5"></div>
    <div class="cb" style="top:148px"></div>
    <div class="td l" style="left:63px;top:144px;color:#333">WMA0MP071243</div>
    <div style="position:absolute;left:0;top:231px;width:214px;height:95px;background:#fff"></div>
    <div class="cb" style="top:249px"></div>
    <div class="td l" style="left:63px;top:245px;color:#333">WMA0MP071155</div>
    <div style="position:absolute;left:0;top:327px;width:214px;height:93px;background:#fff"></div>
    <div class="cb" style="top:345px"></div>
    <div class="td l" style="left:63px;top:339px;color:#333">WMA0MP071154</div>
    <div style="position:absolute;left:0;top:421px;width:214px;height:93px;background:#fff"></div>
    <div class="cb" style="top:439px"></div>
    <div class="td l" style="left:63px;top:433.500px;color:#333">WMA0MP071153</div>
    <div class="fixl"></div>

    <!-- fixed right column -->
    <div style="position:absolute;left:1493px;top:55px;width:112px;height:75px;background:#fafafa"></div>
    <div class="th" style="left:1510px;top:55px">ดำเนินการ</div>
    <div style="position:absolute;left:1493px;top:130px;width:112px;height:101px;background:#f5f5f5"></div>
    <svg class="ic" style="left:1519px;top:149px" width="17" height="17" viewBox="0 0 17 17"><path d="M4.6 5.2V1.9h7.8v3.3M4.6 12.4H2.9a1.6 1.6 0 0 1-1.6-1.6V6.8a1.6 1.6 0 0 1 1.6-1.6h11.2a1.6 1.6 0 0 1 1.6 1.6v4a1.6 1.6 0 0 1-1.6 1.6h-1.7M4.6 9.6h7.8v5.5H4.6z" fill="none" stroke="#4a35b8" stroke-width="1.5" stroke-linejoin="round"/></svg><svg class="ic" style="left:1560px;top:149px" width="15" height="17" viewBox="0 0 15 17"><rect x="0.9" y="0.9" width="13.2" height="15.2" rx="1.6" fill="none" stroke="#4a35b8" stroke-width="1.4"/><path d="M3.6 3v4.4M5.3 3v4.4M7 3v4.4M8.7 3v4.4M10.4 3v4.4M11.6 3v4.4" stroke="#4a35b8" stroke-width="0.9"/><path d="M3.4 9.8h8.2M3.4 12.6h5" stroke="#4a35b8" stroke-width="1.5"/></svg><svg class="ic" style="left:1519px;top:182px" width="17" height="17" viewBox="0 0 17 17"><circle cx="8.5" cy="8.5" r="7.4" fill="none" stroke="#4a35b8" stroke-width="1.4"/><path d="M4.8 8.5h7.4" stroke="#4a35b8" stroke-width="1.4"/></svg><svg class="ic" style="left:1560px;top:182px" width="15" height="17" viewBox="0 0 15 17"><path d="M2.4 0.9h6.8l4.9 4.7v8.9a1.6 1.6 0 0 1-1.6 1.6H2.4a1.5 1.5 0 0 1-1.5-1.5V2.4A1.5 1.5 0 0 1 2.4 .9z" fill="none" stroke="#4a35b8" stroke-width="1.4" stroke-linejoin="round"/><path d="M9 1v4.8h5" fill="none" stroke="#4a35b8" stroke-width="1.2"/><path d="M3.6 9.2h7.6M3.6 12.4h7.6" stroke="#4a35b8" stroke-width="1.5"/></svg>
    <div style="position:absolute;left:1493px;top:231px;width:112px;height:95px;background:#fff"></div>
    <svg class="ic" style="left:1519px;top:250px" width="17" height="17" viewBox="0 0 17 17"><path d="M4.6 5.2V1.9h7.8v3.3M4.6 12.4H2.9a1.6 1.6 0 0 1-1.6-1.6V6.8a1.6 1.6 0 0 1 1.6-1.6h11.2a1.6 1.6 0 0 1 1.6 1.6v4a1.6 1.6 0 0 1-1.6 1.6h-1.7M4.6 9.6h7.8v5.5H4.6z" fill="none" stroke="#4a35b8" stroke-width="1.5" stroke-linejoin="round"/></svg><svg class="ic" style="left:1560px;top:250px" width="15" height="17" viewBox="0 0 15 17"><rect x="0.9" y="0.9" width="13.2" height="15.2" rx="1.6" fill="none" stroke="#4a35b8" stroke-width="1.4"/><path d="M3.6 3v4.4M5.3 3v4.4M7 3v4.4M8.7 3v4.4M10.4 3v4.4M11.6 3v4.4" stroke="#4a35b8" stroke-width="0.9"/><path d="M3.4 9.8h8.2M3.4 12.6h5" stroke="#4a35b8" stroke-width="1.5"/></svg><svg class="ic" style="left:1519px;top:284.500px" width="17" height="17" viewBox="0 0 17 17"><circle cx="8.5" cy="8.5" r="7.4" fill="none" stroke="#4a35b8" stroke-width="1.4"/><path d="M4.8 8.5h7.4" stroke="#4a35b8" stroke-width="1.4"/></svg><svg class="ic" style="left:1560px;top:284.500px" width="15" height="17" viewBox="0 0 15 17"><path d="M2.4 0.9h6.8l4.9 4.7v8.9a1.6 1.6 0 0 1-1.6 1.6H2.4a1.5 1.5 0 0 1-1.5-1.5V2.4A1.5 1.5 0 0 1 2.4 .9z" fill="none" stroke="#4a35b8" stroke-width="1.4" stroke-linejoin="round"/><path d="M9 1v4.8h5" fill="none" stroke="#4a35b8" stroke-width="1.2"/><path d="M3.6 9.2h7.6M3.6 12.4h7.6" stroke="#4a35b8" stroke-width="1.5"/></svg>
    <div style="position:absolute;left:1493px;top:327px;width:112px;height:93px;background:#fff"></div>
    <svg class="ic" style="left:1519px;top:344.500px" width="17" height="17" viewBox="0 0 17 17"><path d="M4.6 5.2V1.9h7.8v3.3M4.6 12.4H2.9a1.6 1.6 0 0 1-1.6-1.6V6.8a1.6 1.6 0 0 1 1.6-1.6h11.2a1.6 1.6 0 0 1 1.6 1.6v4a1.6 1.6 0 0 1-1.6 1.6h-1.7M4.6 9.6h7.8v5.5H4.6z" fill="none" stroke="#4a35b8" stroke-width="1.5" stroke-linejoin="round"/></svg><svg class="ic" style="left:1560px;top:344.500px" width="15" height="17" viewBox="0 0 15 17"><rect x="0.9" y="0.9" width="13.2" height="15.2" rx="1.6" fill="none" stroke="#4a35b8" stroke-width="1.4"/><path d="M3.6 3v4.4M5.3 3v4.4M7 3v4.4M8.7 3v4.4M10.4 3v4.4M11.6 3v4.4" stroke="#4a35b8" stroke-width="0.9"/><path d="M3.4 9.8h8.2M3.4 12.6h5" stroke="#4a35b8" stroke-width="1.5"/></svg><svg class="ic" style="left:1519px;top:378px" width="17" height="17" viewBox="0 0 17 17"><circle cx="8.5" cy="8.5" r="7.4" fill="none" stroke="#4a35b8" stroke-width="1.4"/><path d="M4.8 8.5h7.4" stroke="#4a35b8" stroke-width="1.4"/></svg><svg class="ic" style="left:1560px;top:378px" width="15" height="17" viewBox="0 0 15 17"><path d="M2.4 0.9h6.8l4.9 4.7v8.9a1.6 1.6 0 0 1-1.6 1.6H2.4a1.5 1.5 0 0 1-1.5-1.5V2.4A1.5 1.5 0 0 1 2.4 .9z" fill="none" stroke="#4a35b8" stroke-width="1.4" stroke-linejoin="round"/><path d="M9 1v4.8h5" fill="none" stroke="#4a35b8" stroke-width="1.2"/><path d="M3.6 9.2h7.6M3.6 12.4h7.6" stroke="#4a35b8" stroke-width="1.5"/></svg>
    <div style="position:absolute;left:1493px;top:421px;width:112px;height:93px;background:#fff"></div>
    <svg class="ic" style="left:1519px;top:439px" width="17" height="17" viewBox="0 0 17 17"><path d="M4.6 5.2V1.9h7.8v3.3M4.6 12.4H2.9a1.6 1.6 0 0 1-1.6-1.6V6.8a1.6 1.6 0 0 1 1.6-1.6h11.2a1.6 1.6 0 0 1 1.6 1.6v4a1.6 1.6 0 0 1-1.6 1.6h-1.7M4.6 9.6h7.8v5.5H4.6z" fill="none" stroke="#4a35b8" stroke-width="1.5" stroke-linejoin="round"/></svg><svg class="ic" style="left:1560px;top:439px" width="15" height="17" viewBox="0 0 15 17"><rect x="0.9" y="0.9" width="13.2" height="15.2" rx="1.6" fill="none" stroke="#4a35b8" stroke-width="1.4"/><path d="M3.6 3v4.4M5.3 3v4.4M7 3v4.4M8.7 3v4.4M10.4 3v4.4M11.6 3v4.4" stroke="#4a35b8" stroke-width="0.9"/><path d="M3.4 9.8h8.2M3.4 12.6h5" stroke="#4a35b8" stroke-width="1.5"/></svg><svg class="ic" style="left:1519px;top:473px" width="17" height="17" viewBox="0 0 17 17"><circle cx="8.5" cy="8.5" r="7.4" fill="none" stroke="#4a35b8" stroke-width="1.4"/><path d="M4.8 8.5h7.4" stroke="#4a35b8" stroke-width="1.4"/></svg><svg class="ic" style="left:1560px;top:473px" width="15" height="17" viewBox="0 0 15 17"><path d="M2.4 0.9h6.8l4.9 4.7v8.9a1.6 1.6 0 0 1-1.6 1.6H2.4a1.5 1.5 0 0 1-1.5-1.5V2.4A1.5 1.5 0 0 1 2.4 .9z" fill="none" stroke="#4a35b8" stroke-width="1.4" stroke-linejoin="round"/><path d="M9 1v4.8h5" fill="none" stroke="#4a35b8" stroke-width="1.2"/><path d="M3.6 9.2h7.6M3.6 12.4h7.6" stroke="#4a35b8" stroke-width="1.5"/></svg>
    <div class="fixr"></div>
  </div>
</div>

<!-- POPOVER -->
<div id="pop">
  <div class="pt">รายละเอียดการพิมพ์</div>
  <div class="pl"></div>
  <div class="pi" style="top:72px"><svg class="bc" style="width:16px;height:12px" viewBox="0 0 16 12"><rect x="0" y="0" width="2" height="12" fill="#72d9be"/><rect x="2" y="0" width="0.9" height="12" fill="#a9e9da"/><rect x="2.9" y="0" width="2.3" height="12" fill="#72d9be"/><rect x="5.2" y="0" width="1" height="12" fill="#b6ecdf"/><rect x="6.2" y="0" width="0.9" height="12" fill="#76dac0"/><rect x="7.1" y="0" width="1" height="12" fill="#a6e8d8"/><rect x="8.1" y="0" width="1.4" height="12" fill="#68d5ba"/><rect x="9.5" y="0" width="5.2" height="12" fill="#4dccac"/><rect x="14.7" y="0" width="1.3" height="12" fill="#7adbc2"/></svg>พิมพ์แล้ว1</div>
  <div class="pi" style="top:111px"><svg class="bc" style="width:16px;height:12px" viewBox="0 0 16 12"><rect x="0" y="0" width="2" height="12" fill="#c4c4cb"/><rect x="2" y="0" width="0.9" height="12" fill="#dcdce1"/><rect x="2.9" y="0" width="2.3" height="12" fill="#c4c4cb"/><rect x="5.2" y="0" width="1" height="12" fill="#e0e0e5"/><rect x="6.2" y="0" width="0.9" height="12" fill="#c6c6cd"/><rect x="7.1" y="0" width="1" height="12" fill="#d8d8de"/><rect x="8.1" y="0" width="1.4" height="12" fill="#bebec6"/><rect x="9.5" y="0" width="5.2" height="12" fill="#adadb6"/><rect x="14.7" y="0" width="1.3" height="12" fill="#c2c2c9"/></svg>ยังไม่พิมพ์0</div>
</div>

<!-- RED ANNOTATIONS -->
<svg id="anno" width="1920" height="912" viewBox="0 0 1920 912">
  <rect x="923" y="570" width="158.500" height="53.700" rx="2.5" fill="none" stroke="#fb0f0a" stroke-width="4.5"/>
  <rect x="860.8" y="650.8" width="172.4" height="126.4" rx="2.5" fill="none" stroke="#fb0f0a" stroke-width="4.8"/>
  <path d="M1061.5 632 L1048 668" stroke="#fb0f0a" stroke-width="4.2" stroke-linecap="round" fill="none"/>
  <path d="M1042 685 L1039.2 661.5 L1047.5 668.2 L1058 670.5 Z" fill="#fb0f0a" stroke="#fb0f0a" stroke-width="1" stroke-linejoin="round"/>
</svg>

<!-- FLOATING BUTTONS -->
<div class="fl" style="left:1865px;top:855px;width:40px;height:40px;background:#fff;box-shadow:0 2px 10px rgba(0,0,0,.10)"></div>
<div class="fl" style="left:1876px;top:866px;width:18px;height:18px;background:linear-gradient(135deg,#08c4d8,#1668f0)"><svg width="18" height="18" viewBox="0 0 18 18" style="position:absolute;left:0;top:0"><path d="M4.3 7.2q1.4-1.6 2.8 0M10.9 7.2q1.4-1.6 2.8 0" fill="none" stroke="#fff" stroke-width="1.2" stroke-linecap="round"/><path d="M5.2 10.2q3.8 4.2 7.6 0" fill="none" stroke="#fff" stroke-width="1.3" stroke-linecap="round"/></svg></div>
<div class="fl" style="left:1865px;top:787px;width:40px;height:40px;background:#fff;box-shadow:0 2px 10px rgba(0,0,0,.10)"><svg width="18" height="16" viewBox="0 0 18 16" style="position:absolute;left:11px;top:12px"><path d="M9 0v2" stroke="#0a5cff" stroke-width="1.6"/><rect x="0.3" y="1.6" width="17.4" height="2" fill="#0a5cff"/><rect x="2" y="3" width="14" height="8.6" fill="#0a5cff"/><path d="M5 6.3h8M5 8.7h5.5" stroke="#fff" stroke-width="1.1"/><path d="M6.3 11.5L3.2 15.2M11.7 11.5l3.1 3.7M2.6 13.2h12.8" stroke="#0a5cff" stroke-width="1.5" fill="none"/></svg></div>
<div class="fl" style="left:1842px;top:834px;width:41px;height:41px;background:linear-gradient(135deg,#7d3aae 10%,#6b52c0 50%,#5a86dc 95%);box-shadow:0 3px 10px rgba(80,60,160,.25)"><svg width="20" height="18" viewBox="0 0 20 18" style="position:absolute;left:11px;top:12px"><path d="M2.2 10.6V3.4a2 2 0 0 1 2-2h9.6" fill="none" stroke="#fff" stroke-width="1.5" stroke-linecap="round"/><path d="M6.4 4.2h9.8a1.8 1.8 0 0 1 1.8 1.8v6.6a1.8 1.8 0 0 1-1.8 1.8h-.6l.4 2.4-3.2-2.4H6.4a1.8 1.8 0 0 1-1.8-1.8V6a1.8 1.8 0 0 1 1.8-1.8z" fill="#fff"/></svg></div>
</body>
</html>
